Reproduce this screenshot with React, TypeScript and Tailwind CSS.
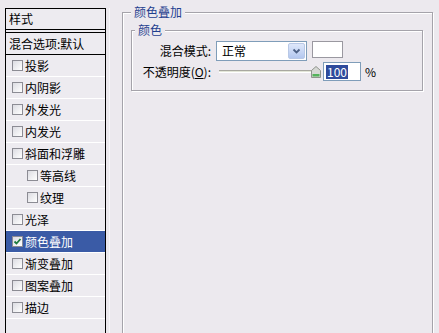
import { ReactNode } from "react";

const font = { fontFamily: '"Noto Sans CJK SC", "Noto Sans", sans-serif' };

type Item = { label: string; indent?: boolean; checked?: boolean; active?: boolean };

const items: Item[] = [
  { label: "投影" },
  { label: "内阴影" },
  { label: "外发光" },
  { label: "内发光" },
  { label: "斜面和浮雕" },
  { label: "等高线", indent: true },
  { label: "纹理", indent: true },
  { label: "光泽" },
  { label: "颜色叠加", checked: true, active: true },
  { label: "渐变叠加" },
  { label: "图案叠加" },
  { label: "描边" },
  { label: "" },
];

function Checkbox({ checked }: { checked?: boolean }) {
  return (
    <span className="w-[11px] h-[11px] shrink-0 border border-[#8c8c94] bg-gradient-to-br from-[#dcdce2] to-white flex items-center justify-center">
      {checked && (
        <svg width="9" height="9" viewBox="0 0 9 9">
          <path d="M1.5 4.5 L3.5 6.5 L7.5 2" fill="none" stroke="#1c7a3c" strokeWidth="1.8" />
        </svg>
      )}
    </span>
  );
}

function StyleRow({ item }: { item: Item }) {
  return (
    <div
      className={
        "h-[22px] shrink-0 flex items-center gap-[2px] border-b border-white " +
        (item.indent ? "pl-[21px] " : "pl-[6px] ") +
        (item.active ? "bg-[#3a5ba6] text-white" : "text-black")
      }
    >
      {item.label && <Checkbox checked={item.checked} />}
      <span className="text-[12px] leading-none">{item.label}</span>
    </div>
  );
}

function Group({ title, className, children }: { title: string; className: string; children: ReactNode }) {
  return (
    <fieldset className={"border border-[#a5a3aa] shadow-[inset_1px_1px_0_#ffffff,1px_1px_0_#ffffff] " + className}>
      <legend className="px-[3px] text-[12px] leading-[14px] text-[#1f3f8f] bg-[#ece9ee]">{title}</legend>
      {children}
    </fieldset>
  );
}

export default function App() {
  return (
    <div className="w-[439px] h-[333px] overflow-hidden bg-[#ece9ee] flex" style={font}>
      {/* style list */}
      <div className="ml-[5px] mt-[8px] w-[101px] h-[340px] border border-black bg-[#edebf0] flex flex-col">
        <div className="h-[21px] shrink-0 flex items-center pl-[3px] text-[12px] border-b border-black">样式</div>
        <div className="h-[2px] shrink-0" />
        <div className="h-[23px] shrink-0 flex items-center pl-[3px] text-[12px] border-t border-b border-black">混合选项:默认</div>
        {items.map((it, i) => (
          <StyleRow key={i} item={it} />
        ))}
      </div>

      {/* right side */}
      <div className="flex">
        <div className="w-[16px] flex">
          <div className="ml-[3px] mt-[8px] w-px h-full bg-[#f7f6f9]" />
        </div>
        <Group title="颜色叠加" className="mt-[5px] w-[311px] h-[340px] pl-[8px] pr-[9px] pt-[4px]">
          <Group title="颜色" className="w-full h-[68px] pl-[3px] text-[12px] text-black">
            <div className="grid grid-cols-[76px_1fr] items-center gap-x-[5px] mt-[4px]">
              <span className="text-right">混合模式:</span>
              <div className="flex items-center gap-[5px]">
                <div className="w-[91px] h-[20px] border border-[#7f9db9] bg-white flex items-stretch">
                  <span className="flex-1 pl-[5px] flex items-center text-[12px]">正常</span>
                  <span className="w-[17px] m-px rounded-[2px] border border-[#b8c8e6] bg-gradient-to-b from-[#dfe8fa] to-[#b3c7ef] flex items-center justify-center">
                    <svg width="9" height="7" viewBox="0 0 9 7">
                      <path d="M1.5 1.5 L4.5 4.5 L7.5 1.5" fill="none" stroke="#4d6185" strokeWidth="1.8" />
                    </svg>
                  </span>
                </div>
                <div className="w-[31px] h-[17px] mb-[3px] border border-[#9a98a0] bg-white" />
              </div>

              <span className="text-right mt-[1px]">
                不透明度(<span className="underline">O</span>):
              </span>
              <div className="flex items-center mt-[1px]">
                <div className="relative w-[104px] h-[18px] flex items-center">
                  <div className="ml-[3px] w-[95px] h-[3px] border-t border-[#a8a8a0] border-b border-b-white bg-[#e3e6d8]" />
                  <svg className="absolute left-[95px] top-[3px]" width="10" height="12" viewBox="0 0 10 12">
                    <path d="M5 0.5 L9.5 4.5 V11.5 H0.5 V4.5 Z" fill="#d6d8d4" stroke="#8f948c" />
                    <path d="M1.5 8 H8.5 V10.5 H1.5 Z" fill="#53b35a" />
                  </svg>
                </div>
                <div className="ml-[3px] w-[38px] h-[19px] border border-[#7f9db9] bg-white flex items-center pl-[2px]">
                  <span className="bg-[#2f4b9c] text-white px-[1px] leading-[14px]">100</span>
                </div>
                <span className="ml-[4px]">%</span>
              </div>
            </div>
          </Group>
        </Group>
      </div>
    </div>
  );
}
